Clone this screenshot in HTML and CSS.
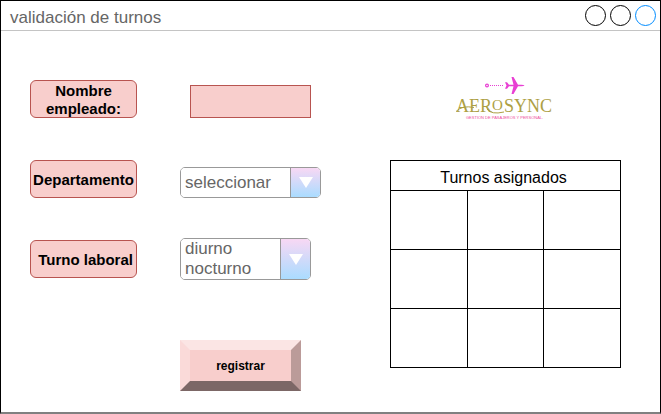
FILE: index.html
```html
<!DOCTYPE html>
<html lang="es">
<head>
<meta charset="utf-8">
<meta name="viewport" content="width=device-width, initial-scale=1">
<title>validación de turnos</title>
<link rel="stylesheet" href="styles.css">
</head>
<body>
<div class="window">
  <header class="titlebar">
    <h1 class="title">validación de turnos</h1>
    <div class="dots">
      <span class="dot"></span>
      <span class="dot"></span>
      <span class="dot dot-blue"></span>
    </div>
  </header>
  <main class="content">
    <form class="form">
      <div class="row row-top">
        <label class="tag" for="nombre">Nombre empleado:</label>
        <div class="field">
          <input class="name-input" id="nombre" type="text">
        </div>
      </div>
      <div class="row row-low">
        <label class="tag" for="departamento">Departamento</label>
        <div class="field">
          <div class="combo">
            <select class="combo-select" id="departamento">
              <option>seleccionar</option>
            </select>
            <span class="arrow"><svg width="14" height="11" viewBox="0 0 14 11"><path d="M0 0H14L7 11Z" fill="#fff"/></svg></span>
          </div>
        </div>
      </div>
      <div class="row">
        <label class="tag" for="turno">&nbsp;Turno laboral</label>
        <div class="field">
          <div class="combo combo-list">
            <select class="combo-select" id="turno" size="2">
              <option>diurno</option>
              <option>nocturno</option>
            </select>
            <span class="arrow"><svg width="14" height="11" viewBox="0 0 14 11"><path d="M0 0H14L7 11Z" fill="#fff"/></svg></span>
          </div>
        </div>
      </div>
      <div class="row row-action">
        <button class="submit" type="button">registrar</button>
      </div>
    </form>
    <section class="side">
      <svg class="logo" width="100" height="45" viewBox="0 0 100 45" role="img" aria-label="Aerosync">
        <g fill="none" stroke="#e83fd3">
          <circle cx="31" cy="9.500" r="1.400" stroke-width="1.200"/>
          <path d="M34 9.500H48" stroke-width="1" stroke-dasharray="1 1"/>
        </g>
        <path fill="#e83fd3" d="M49 6.200L51 6.200L53 8.700H57.500L55.500 1H57.500L62 8.700H65.500Q68 9 68.500 9.500Q68 10 65.500 10.300H62L57.500 18H55.500L57.500 10.300H53L51 12.800H49L50.500 9.500Z"/>
        <g class="logo-name">
          <text x="0" y="36">AER</text>
          <text class="logo-o" x="36" y="34">O</text>
          <text x="48" y="36">SYNC</text>
        </g>
        <g fill="none" stroke="#ada044">
          <path d="M31 33Q35 39 48 36"/>
          <path d="M0 35.500Q6 29 18 31.500"/>
        </g>
        <text class="logo-tag" x="10" y="43">GESTION DE PASAJEROS Y PERSONAL.</text>
      </svg>
      <table class="shifts">
        <thead>
          <tr><th colspan="3">Turnos asignados</th></tr>
        </thead>
        <tbody>
          <tr><td></td><td></td><td></td></tr>
          <tr><td></td><td></td><td></td></tr>
          <tr><td></td><td></td><td></td></tr>
        </tbody>
      </table>
    </section>
  </main>
</div>
</body>
</html>
```

FILE: styles.css
```css
* {
  box-sizing: border-box;
}

body {
  margin: 0;
  background: #fff;
  color: #000;
  font-family: "Liberation Sans", Arial, sans-serif;
}

.window {
  min-height: 100vh;
  border: 1px solid #000;
  border-bottom: 2px solid #808080;
}

.titlebar {
  display: flex;
  align-items: center;
  justify-content: space-between;
  height: 30px;
  padding: 0 4px 0 9px;
  border-bottom: 1px solid #c4c4c4;
}

.title {
  margin: 0;
  padding-top: 4px;
  color: #666;
  font-size: 17px;
  font-weight: normal;
  line-height: 20px;
}

.dots {
  display: flex;
  gap: 4px;
}

.dot {
  width: 21px;
  height: 21px;
  border: 1px solid #000;
  border-radius: 50%;
}

.dot-blue {
  border-color: #008cff;
}

.content {
  display: grid;
  grid-template-columns: minmax(0, 291fr) minmax(0, 231fr);
  gap: 69px;
  padding: 45px 39px 0 29px;
}

.form {
  display: flex;
  flex-direction: column;
  gap: 40px;
  padding-top: 4px;
}

.row {
  display: grid;
  grid-template-columns: 107fr 141fr;
  column-gap: 43px;
  align-items: center;
}

.row-top {
  align-items: start;
  min-height: 40px;
}

.row-low {
  align-items: end;
}

.tag {
  display: flex;
  align-items: center;
  justify-content: center;
  height: 38px;
  padding-top: 2px;
  border: 1px solid #b85450;
  border-radius: 6px;
  background: #f8cecc;
  font-size: 15px;
  font-weight: bold;
  line-height: 18px;
  text-align: center;
}

.name-input {
  display: block;
  width: calc(100% - 20px);
  height: 33px;
  margin: 5px 10px 0;
  padding: 0 6px;
  border: 1px solid #b85450;
  background: #f8cecc;
  font: inherit;
}

.combo {
  position: relative;
  height: 31px;
  overflow: hidden;
  border: 1px solid #999;
  border-radius: 5px;
}

.combo-list {
  height: 42px;
  margin-right: 10px;
}

.combo-select {
  display: block;
  width: 100%;
  height: 100%;
  margin: 0;
  padding: 0 34px 0 4px;
  border: 0;
  appearance: none;
  background: #fff;
  color: #666;
  font-family: inherit;
  font-size: 17px;
  overflow: hidden;
}

.combo-list .combo-select {
  padding: 0 30px 0 2px;
}

.combo-list option {
  height: 20px;
  padding: 0 2px;
  line-height: 21px;
}

.arrow {
  position: absolute;
  top: 0;
  right: 0;
  bottom: 0;
  display: flex;
  align-items: center;
  justify-content: center;
  width: 30px;
  border-left: 1px solid #999;
  background: linear-gradient(#f8d8f4, #aadcff);
  pointer-events: none;
}

.row-action {
  padding-top: 20px;
}

.submit {
  grid-column: 2;
  height: 51px;
  margin-right: 20px;
  padding: 0;
  border: 10px solid;
  border-color: #fbe5e4 #bb9b99 #7c6766 #fadad9;
  background: #f8cecc;
  color: #000;
  font-family: inherit;
  font-size: 12px;
  font-weight: bold;
}

.side {
  display: flex;
  flex-direction: column;
  align-items: center;
  gap: 39px;
}

.logo-name {
  fill: #ada044;
  font-family: "Liberation Serif", serif;
  font-size: 18px;
}

.logo-o {
  font-size: 15px;
}

.logo-tag {
  fill: #ee4a9c;
  font-family: "Liberation Sans", sans-serif;
  font-size: 4px;
}

.shifts {
  width: 100%;
  border-collapse: collapse;
  table-layout: fixed;
}

.shifts th,
.shifts td {
  height: 59px;
  padding: 0;
  border: 1px solid #000;
}

.shifts th {
  height: 30px;
  padding: 4px 4px 0 0;
  font-size: 16px;
  font-weight: normal;
  line-height: 18px;
}
```
